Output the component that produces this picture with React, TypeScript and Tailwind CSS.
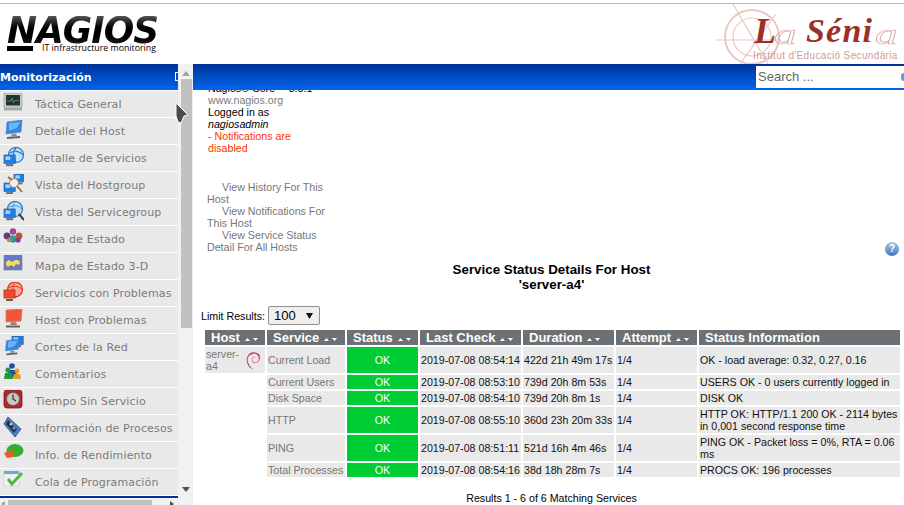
import React from "react";
import { SiDebian } from "react-icons/si";

const Monitor = ({ c1 = "#2f86e8", c2 = "#9fd0ff" }: { c1?: string; c2?: string }) => (
  <g>
    <path d="M4 2 L19 0 L18 12 L3 14 Z" fill={c1} stroke="#5a7fa8" strokeWidth="0.6" />
    <path d="M6 3 L17 2 L14 8 L6 11 Z" fill={c2} opacity="0.6" />
    <path d="M9 14 L13 13.5 L14 16 L8 16.5 Z" fill="#8a8f96" />
    <path d="M4 17 L17 16 L17 18 L4 19 Z" fill="#5f646b" />
  </g>
);

const SmallPc = ({ x, y, s = 0.55, c = "#1c7fe6" }: { x: number; y: number; s?: number; c?: string }) => (
  <g transform={`translate(${x} ${y}) scale(${s})`}>
    <rect x="0" y="0" width="16" height="12" fill={c} stroke="#37587e" strokeWidth="1" />
    <rect x="2" y="2" width="7" height="5" fill="#9fd3ff" />
    <rect x="3" y="13" width="10" height="3" fill="#66707a" />
  </g>
);

const icons: React.ReactNode[] = [
  <g key="0">
    <rect x="1" y="0" width="18" height="15" rx="1" fill="#c9cbcb" stroke="#8d9090" strokeWidth="0.6" />
    <rect x="3" y="2" width="14" height="10.5" fill="#27322e" />
    <path d="M4 8 H8 L9 5 L10.5 10 L11.5 7.5 H16" stroke="#52b27b" strokeWidth="0.7" fill="none" />
    <rect x="1" y="15" width="18" height="2.5" fill="#a7a9a9" />
  </g>,
  <Monitor key="1" />,
  <g key="2">
    <circle cx="13" cy="8" r="7.5" fill="#bfe0fb" stroke="#2b6fc4" strokeWidth="1.2" />
    <path d="M7 6 C11 3 17 4 20 8 M13 1 C9 5 10 11 13 15" stroke="#2b78d6" strokeWidth="1.1" fill="none" />
    <SmallPc x={1} y={8} s={0.7} />
  </g>,
  <g key="3">
    <SmallPc x={11} y={0} s={0.65} />
    <SmallPc x={1} y={9} s={0.7} />
    <circle cx="11" cy="9" r="4.5" fill="#f4f1e8" stroke="#a98b5e" strokeWidth="1" />
    <path d="M14 12 L19 18 M5 3 L9 6" stroke="#8a6a3c" strokeWidth="1.6" />
  </g>,
  <g key="4">
    <circle cx="12" cy="8" r="7.5" fill="#bcdcf8" stroke="#2b6fc4" strokeWidth="1.2" />
    <path d="M6 6 C10 4 15 4 19 8 M12 1 C9 5 9 11 12 15" stroke="#4b8fdc" strokeWidth="0.9" fill="none" />
    <SmallPc x={1} y={8} s={0.7} />
    <path d="M16 13 L21 19" stroke="#38393a" strokeWidth="2" />
  </g>,
  <g key="5">
    <circle cx="10" cy="3.5" r="3.2" fill="#a04a8c" />
    <circle cx="4" cy="8" r="3.4" fill="#5b3d86" />
    <circle cx="16" cy="8" r="3.4" fill="#c1562e" />
    <circle cx="10" cy="11" r="3.8" fill="#2f9aa5" />
    <circle cx="15" cy="12" r="2.6" fill="#7b3f90" />
    <circle cx="6" cy="12" r="2.2" fill="#c98a2c" />
  </g>,
  <g key="6">
    <rect x="1" y="0" width="18" height="15" fill="#6a78c8" stroke="#7b7b8c" strokeWidth="0.6" />
    <path d="M3 7 L6 5 L9 7 L12 5 L15 5 L17 7 L16 10 L13 9 L11 12 L8 10 L5 12 L3 10 Z" fill="#f4db5e" />
  </g>,
  <g key="7">
    <circle cx="12" cy="7.5" r="7.5" fill="#f7a79a" stroke="#d83a22" strokeWidth="1.3" />
    <path d="M5 6 C10 3 16 4 20 8 M12 0 C9 5 9 11 12 15" stroke="#d83a22" strokeWidth="1" fill="none" />
    <rect x="1" y="8" width="11" height="8" fill="#ef4a2b" stroke="#a43722" strokeWidth="0.8" />
    <rect x="3" y="17" width="7" height="2" fill="#87503f" />
  </g>,
  <g key="8">
    <path d="M3 1 L19 0 L18 12 L3 13 Z" fill="#f25533" stroke="#b4846c" strokeWidth="0.8" />
    <path d="M8 13 H13 L14 16 H7 Z" fill="#9c8a7e" />
    <path d="M3 16.5 H17 V18.5 H3 Z" fill="#7a5c4e" />
  </g>,
  <g key="9">
    <SmallPc x={9} y={0} s={0.7} />
    <g transform="translate(0 3) scale(0.85)">
      <Monitor />
    </g>
  </g>,
  <g key="10">
    <circle cx="9" cy="3" r="2.8" fill="#1e4fa8" />
    <path d="M4 14 L5 7 H13 L14 14 Z" fill="#1e4fa8" />
    <circle cx="5" cy="7" r="2.6" fill="#1f9c33" />
    <path d="M1 16 L2 10 H9 L10 16 Z" fill="#1f9c33" />
    <circle cx="14" cy="8" r="2.4" fill="#e89f2a" />
    <path d="M10 16 L11 11 H17 L18 16 Z" fill="#e89f2a" />
  </g>,
  <g key="11">
    <rect x="1" y="0" width="18" height="18" rx="3" fill="#b3262b" stroke="#6d1a1c" strokeWidth="0.8" />
    <circle cx="10" cy="9" r="6.5" fill="#c8c6c2" stroke="#5a5a5a" strokeWidth="0.8" />
    <path d="M10 4.5 V9 L13 11" stroke="#333" strokeWidth="1.2" fill="none" />
  </g>,
  <g key="12">
    <path d="M5 0 L18 12 L12 20 L1 7 Z" fill="#4a7fd0" stroke="#2a4a7e" strokeWidth="0.8" />
    <path d="M5 3 L14 12 L11 16 L3 7 Z" fill="#2a3038" />
    <circle cx="8" cy="7" r="1.5" fill="#b9c6d6" />
    <circle cx="11" cy="11" r="1.5" fill="#6aa1e6" />
  </g>,
  <g key="13">
    <ellipse cx="12" cy="6.5" rx="8.5" ry="6.5" fill="#2fb02f" />
    <path d="M1 9 L10 6 L10 13 L4 14 Z" fill="#ea5a24" />
  </g>,
  <g key="14">
    <rect x="1" y="0" width="15" height="15" fill="#eef2f4" stroke="#c3ccd2" strokeWidth="0.6" />
    <rect x="1" y="0" width="15" height="3" fill="#6da7de" />
    <path d="M5 8 L9 13 L19 2" stroke="#55b83a" strokeWidth="3" fill="none" />
  </g>,
];

const menu = [
  "Táctica General",
  "Detalle del Host",
  "Detalle de Servicios",
  "Vista del Hostgroup",
  "Vista del Servicegroup",
  "Mapa de Estado",
  "Mapa de Estado 3-D",
  "Servicios con Problemas",
  "Host con Problemas",
  "Cortes de la Red",
  "Comentarios",
  "Tiempo Sin Servicio",
  "Información de Procesos",
  "Info. de Rendimiento",
  "Cola de Programación",
];

const rows = [
  { s: "Current Load", t: "2019-07-08 08:54:14", d: "422d 21h 49m 17s", i: "OK - load average: 0.32, 0.27, 0.16", h: "h-[26px]" },
  { s: "Current Users", t: "2019-07-08 08:53:10", d: "739d 20h 8m 53s", i: "USERS OK - 0 users currently logged in", h: "h-[14px]" },
  { s: "Disk Space", t: "2019-07-08 08:54:10", d: "739d 20h 8m 1s", i: "DISK OK", h: "h-[14px]" },
  { s: "HTTP", t: "2019-07-08 08:55:10", d: "360d 23h 20m 33s", i: "HTTP OK: HTTP/1.1 200 OK - 2114 bytes in 0,001 second response time", h: "h-[26px]" },
  { s: "PING", t: "2019-07-08 08:51:11", d: "521d 16h 4m 46s", i: "PING OK - Packet loss = 0%, RTA = 0.06 ms", h: "h-[26px]" },
  { s: "Total Processes", t: "2019-07-08 08:54:16", d: "38d 18h 28m 7s", i: "PROCS OK: 196 processes", h: "h-[14px]" },
];

const heads = ["Host", "Service", "Status", "Last Check", "Duration", "Attempt"];

const Sort = () => (
  <svg width="15" height="6" viewBox="0 0 15 6" className="ml-[4px] inline-block align-middle">
    <path d="M1 5 L3.5 2 L6 5 Z" fill="#fff" />
    <path d="M9 2 L14 2 L11.5 5 Z" fill="#fff" />
  </svg>
);

function NagiosLogo() {
  return (
    <div className="flex flex-col items-start">
      <div className="h-[30px] w-[152px] overflow-hidden">
        <span className="block w-max origin-top-left scale-x-[0.97] bg-gradient-to-b from-[#555555] via-[#000000] to-[#222222] bg-clip-text font-['DejaVu_Sans'] text-[37px] font-bold italic leading-[30px] tracking-[-1px] text-transparent">
          NAGIOS
        </span>
      </div>
      <div className="flex items-start">
        <div className="h-[5px] w-[26px] bg-black" />
        <span className="ml-[9px] mt-[-3px] font-['Open_Sans'] text-[8.8px] leading-[11px] text-black">IT infrastructure monitoring</span>
      </div>
    </div>
  );
}

function SeniaLogo() {
  return (
    <div className="relative h-[60px] w-[190px]">
      <svg width="100" height="60" viewBox="0 0 100 60" className="absolute left-0 top-0">
        <g stroke="#e8c8c0" fill="none">
          <circle cx="42" cy="33" r="27" strokeWidth="2" />
          <circle cx="42" cy="33" r="19" strokeWidth="1.2" />
          <path d="M23 0 L58 60 M5 36 H68 M66 10 L30 60" strokeWidth="1.2" />
        </g>
      </svg>
      <div className="absolute left-[44px] top-[10px] font-['Liberation_Serif'] text-[36px] font-bold italic leading-[34px] text-[#9c2f28]">
        L
      </div>
      <div className="absolute left-[64px] top-[15px] origin-left scale-x-[1.5] font-['Liberation_Serif'] text-[30px] italic leading-[30px] text-transparent [-webkit-text-stroke:0.7px_#d9a9a2]">
        a
      </div>
      <div className="absolute left-[96px] top-[10px] font-['Liberation_Serif'] text-[34px] font-bold italic leading-[34px] tracking-[1.2px] text-[#9c2f28]">
        Séni
      </div>
      <div className="absolute left-[165px] top-[15px] origin-left scale-x-[1.5] font-['Liberation_Serif'] text-[30px] italic leading-[30px] text-transparent [-webkit-text-stroke:0.7px_#d9a9a2]">
        a
      </div>
      <div className="absolute left-[43px] top-[46px] whitespace-nowrap font-['Liberation_Sans'] text-[10px] leading-[11px] tracking-[0.35px] text-[#d29c94]">
        Institut d'Educació Secundària
      </div>
    </div>
  );
}

export default function App() {
  return (
    <div className="relative flex h-[505px] w-[904px] flex-col overflow-hidden bg-white font-['Liberation_Sans',sans-serif]">
      <div className="mt-[3px] h-px shrink-0 bg-[#bbbbbb]" />
      <header className="flex h-[60px] shrink-0 items-start justify-between pl-[7px] pr-[4px]">
        <div className="pt-[12px]">
          <NagiosLogo />
        </div>
        <SeniaLogo />
      </header>

      <div className="relative z-10 flex min-h-0 flex-1">
        {/* sidebar */}
        <aside className="flex w-[193px] shrink-0">
          <div className="flex w-[178px] flex-col">
            <div className="relative flex h-[26px] shrink-0 items-center overflow-hidden bg-gradient-to-b from-[#003399] to-[#0066ee]">
              <span className="font-['DejaVu_Sans'] text-[11px] font-bold leading-none text-white">Monitorización</span>
              <span className="absolute right-[-4px] top-[8px] h-[9px] w-[7px] border border-white" />
            </div>
            <div className="h-px shrink-0 bg-white" />
            <nav className="flex flex-col">
              {menu.map((m, i) => (
                <div key={m} className="flex h-[27px] shrink-0 items-center border-b border-white bg-[#e9e9e9] pl-[3px]">
                  <svg width="21" height="20" viewBox="0 0 21 20" className="mb-[3px] shrink-0">
                    {icons[i]}
                  </svg>
                  <span className="ml-[11px] whitespace-nowrap font-['DejaVu_Sans'] text-[11px] leading-none tracking-[0.13px] text-[#7b7b7b]">{m}</span>
                </div>
              ))}
            </nav>
            <div className="h-[2px] shrink-0 bg-[#003399]" />
            <div className="flex h-[13px] shrink-0 items-start bg-[#f1f1f1] pt-[2px]">
              <svg width="4" height="6" viewBox="0 0 4 6" className="ml-[1px] mt-[1px]">
                <path d="M4 0 V6 L0 3 Z" fill="#a3a3a3" />
              </svg>
              <span className="ml-[3px] h-[12px] w-[144px] bg-[#c1c1c1]" />
              <svg width="4" height="6" viewBox="0 0 4 6" className="ml-[18px] mt-[1px]">
                <path d="M0 0 V6 L4 3 Z" fill="#505050" />
              </svg>
            </div>
          </div>
          <div className="flex w-[15px] flex-col items-center bg-[#f1f1f1]">
            <svg width="8" height="5" viewBox="0 0 8 5" className="mt-[7px] shrink-0">
              <path d="M0 5 L4 0 L8 5 Z" fill="#a3a3a3" />
            </svg>
            <span className="ml-[2px] mt-[3px] h-[249px] w-[11px] shrink-0 bg-[#c1c1c1]" />
            <svg width="8" height="5" viewBox="0 0 8 5" className="mt-[159px] shrink-0">
              <path d="M0 0 L8 0 L4 5 Z" fill="#505050" />
            </svg>
          </div>
        </aside>

        {/* main */}
        <main className="flex min-w-0 flex-1 flex-col overflow-hidden bg-white">
          <div className="relative z-10 flex h-[26px] shrink-0 items-start justify-end bg-gradient-to-b from-[#003399] to-[#0066ee] pt-[2px]">
            <div className="flex h-[22px] w-[148px] items-center justify-between overflow-hidden bg-white pl-[2px] font-['Liberation_Sans'] text-[13px] text-[#666666]">
              <span>Search ...</span>
              <span className="mr-[-3px] h-[8px] w-[6px] rounded-full bg-[#5e9fd4]" />
            </div>
          </div>

          <div className="flex h-[162px] shrink-0 flex-col overflow-hidden pl-[15px] text-[10.67px] leading-[12px]">
            <div className="mt-[-8px] w-[125px] text-black">Nagios® Core™ 3.5.1</div>
            <div className="text-[#7b7b7b]">www.nagios.org</div>
            <div className="text-black">Logged in as</div>
            <div className="italic text-black">nagiosadmin</div>
            <div className="w-[100px] text-[#ff3300]">- Notifications are disabled</div>
            <div className="-ml-[1px] mt-[27px] flex w-[125px] flex-col text-[#777777]">
              <div className="indent-[15px]">View History For This Host</div>
              <div className="indent-[15px]">View Notifications For This Host</div>
              <div className="indent-[15px]">View Service Status Detail For All Hosts</div>
            </div>
          </div>

          <div className="flex h-[10px] shrink-0 justify-end pr-[5px]">
            <div className="-mt-[10px] flex h-[14px] w-[14px] items-center justify-center rounded-full bg-gradient-to-b from-[#a8c8ea] to-[#3f78bb] text-[10px] font-bold leading-none text-white">?</div>
          </div>

          <div className="ml-[10px] mr-[4px] flex shrink-0 flex-col items-center text-[13.33px] font-bold leading-[15px] text-black">
            <div>Service Status Details For Host</div>
            <div>'server-a4'</div>
          </div>

          <div className="ml-[8px] mt-[14px] flex h-[19px] shrink-0 items-center text-[10.67px] text-black">
            <span>Limit Results:</span>
            <div className="ml-[3px] flex h-[19px] w-[52px] items-center justify-between rounded-[2px] border border-[#8f8f8f] bg-[#efefef] pl-[5px] pr-[6px] text-[13px]">
              <span>100</span>
              <svg width="7" height="6" viewBox="0 0 7 6">
                <path d="M0 0 H7 L3.5 6 Z" fill="#111" />
              </svg>
            </div>
          </div>

          <table className="ml-[10px] mt-[3px] w-[699px] shrink-0 table-fixed border-separate border-spacing-[2px] text-[10.67px] leading-[12px]">
            <colgroup>
              <col className="w-[60px]" />
              <col className="w-[78px]" />
              <col className="w-[71px]" />
              <col className="w-[101px]" />
              <col className="w-[91px]" />
              <col className="w-[81px]" />
              <col />
            </colgroup>
            <thead>
              <tr>
                {heads.map((h) => (
                  <th key={h} className="h-[15px] overflow-hidden whitespace-nowrap bg-[#6b7174] p-0 pl-[6px] text-left text-[13px] font-bold leading-[15px] text-white">
                    {h}
                    <Sort />
                  </th>
                ))}
                <th className="h-[15px] whitespace-nowrap bg-[#6b7174] p-0 pl-[6px] text-left text-[13px] font-bold leading-[15px] text-white">Status Information</th>
              </tr>
            </thead>
            <tbody>
              {rows.map((r, i) => (
                <tr key={r.s}>
                  {i === 0 && (
                    <td rowSpan={6} className="p-0 align-top">
                      <div className="flex h-[26px] items-center justify-between bg-[#e9e9e9] pl-[1px] pr-[3px] text-[#777777]">
                        <span className="w-[36px] leading-[12px]">server-a4</span>
                        <SiDebian className="h-[21px] w-[17px] text-[#c9366f]" />
                      </div>
                    </td>
                  )}
                  <td className={`${r.h} whitespace-nowrap bg-[#e9e9e9] p-0 pl-[1px] text-[#777777]`}>{r.s}</td>
                  <td className={`${r.h} bg-[#00cc33] p-0 text-center text-white`}>OK</td>
                  <td className={`${r.h} whitespace-nowrap bg-[#e9e9e9] p-0 pl-[1px] text-[#111111]`}>{r.t}</td>
                  <td className={`${r.h} whitespace-nowrap bg-[#e9e9e9] p-0 pl-[1px] text-[#111111]`}>{r.d}</td>
                  <td className={`${r.h} bg-[#e9e9e9] p-0 pl-[1px] text-[#111111]`}>1/4</td>
                  <td className={`${r.h} bg-[#e9e9e9] p-0 pl-[1px] text-[#111111]`}>{r.i}</td>
                </tr>
              ))}
            </tbody>
          </table>

          <div className="ml-[10px] mr-[4px] mt-[13px] shrink-0 text-center text-[10.67px] leading-[12px] text-black">Results 1 - 6 of 6 Matching Services</div>
        </main>
      </div>

      {/* mouse pointer overlay */}
      <svg width="14" height="22" viewBox="0 0 14 22" className="absolute left-[175px] top-[102px] z-20">
        <path d="M1 1 L13 13 L9 14 L6 21 L3 20 L1 14 Z" fill="#4a4a4a" stroke="#fff" strokeWidth="1" />
      </svg>
    </div>
  );
}
